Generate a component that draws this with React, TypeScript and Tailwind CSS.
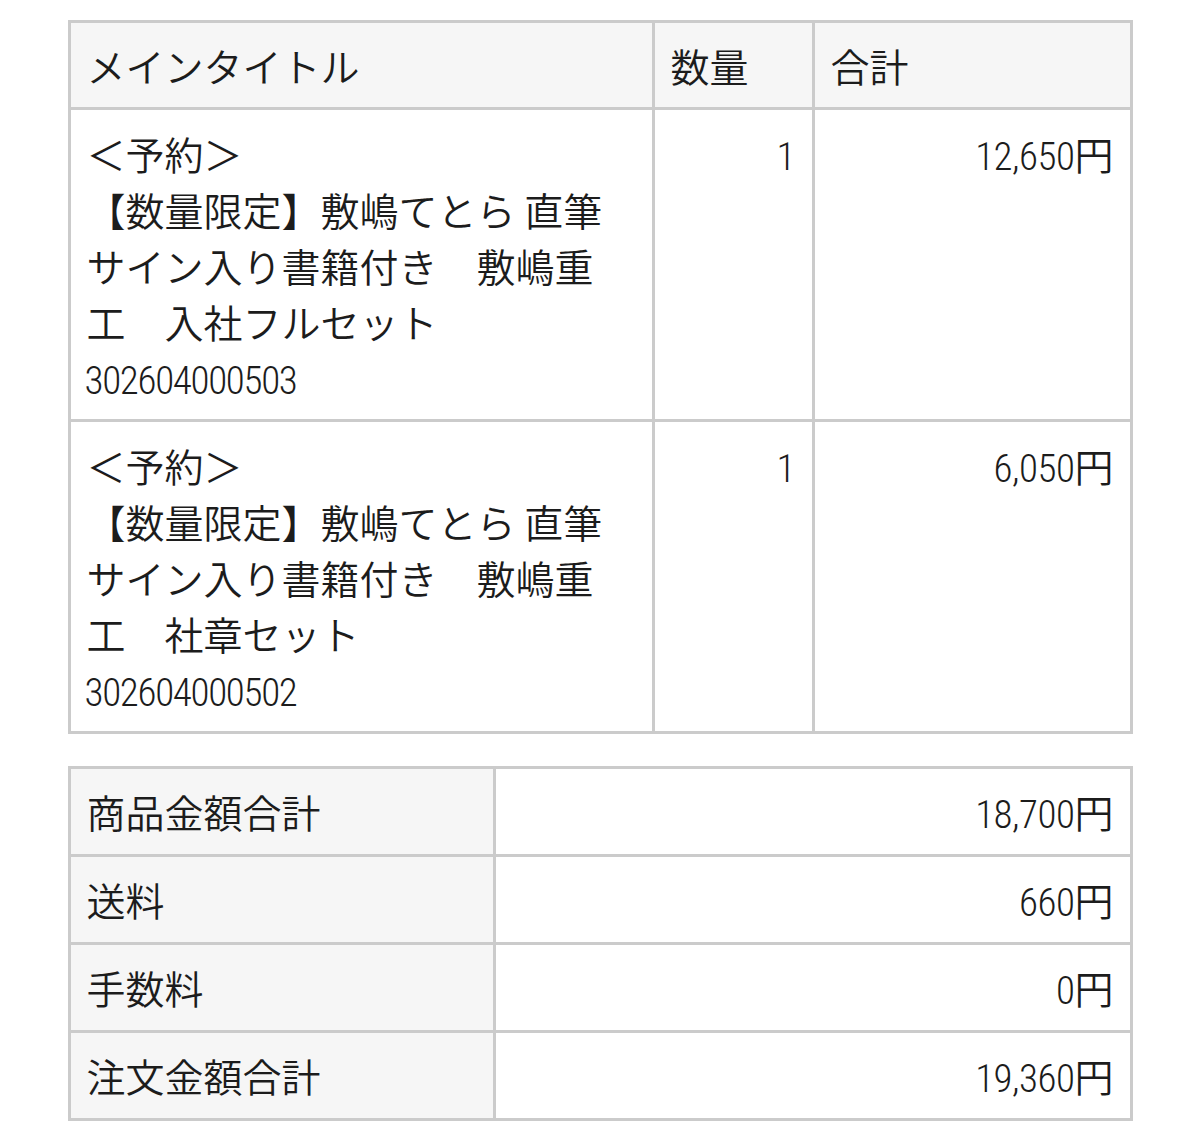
const FONT = "font-['Roboto','Noto_Sans_CJK_JP',sans-serif] [font-stretch:75%] font-[350]";

type Item = { lines: string[]; code: string; qty: number; total: string };

const ITEMS: Item[] = [
  {
    lines: ["＜予約＞", "【数量限定】敷嶋てとら 直筆サイン入り書籍付き　敷嶋重工　入社フルセット"],
    code: "302604000503",
    qty: 1,
    total: "12,650",
  },
  {
    lines: ["＜予約＞", "【数量限定】敷嶋てとら 直筆サイン入り書籍付き　敷嶋重工　社章セット"],
    code: "302604000502",
    qty: 1,
    total: "6,050",
  },
];

const SUMMARY = [
  { label: "商品金額合計", value: "18,700" },
  { label: "送料", value: "660" },
  { label: "手数料", value: "0" },
  { label: "注文金額合計", value: "19,360" },
];

const cell = "border-r-[3px] border-b-[3px] border-[#cbcbcb]";
const head = `${cell} bg-[#f6f6f6] px-4 pt-[18px] pb-[10px]`;

function Yen({ value }: { value: string }) {
  return (
    <>
      <span className="tracking-[-0.5px]">{value}</span>円
    </>
  );
}

export default function App() {
  return (
    <div className={`${FONT} bg-white text-[39px] leading-[56px] text-[#1c1c1c] pt-5 pb-4`}>
      <div className="mx-auto grid w-[1065px] grid-cols-[584px_160px_318px] border-l-[3px] border-t-[3px] border-[#cbcbcb]">
        <div className={head}>メインタイトル</div>
        <div className={head}>数量</div>
        <div className={head}>合計</div>
        {ITEMS.map((item) => (
          <div key={item.code} className="contents">
            <div className={`${cell} pl-4 pr-8 pt-[19px] pb-[10px]`}>
              {item.lines.map((l) => (
                <div key={l}>{l}</div>
              ))}
              <div className="-ml-0.5 tracking-[-1.3px]">{item.code}</div>
            </div>
            <div className={`${cell} px-4 pt-[19px] text-right`}>{item.qty}</div>
            <div className={`${cell} px-4 pt-[19px] text-right`}>
              <Yen value={item.total} />
            </div>
          </div>
        ))}
      </div>

      <div className="mx-auto mt-8 grid w-[1065px] grid-cols-[425px_637px] border-l-[3px] border-t-[3px] border-[#cbcbcb]">
        {SUMMARY.map((row) => (
          <div key={row.label} className="contents">
            <div className={`${cell} bg-[#f6f6f6] px-4 pt-[18px] pb-[11px]`}>{row.label}</div>
            <div className={`${cell} px-4 pt-[18px] pb-[11px] text-right`}>
              <Yen value={row.value} />
            </div>
          </div>
        ))}
      </div>
    </div>
  );
}
